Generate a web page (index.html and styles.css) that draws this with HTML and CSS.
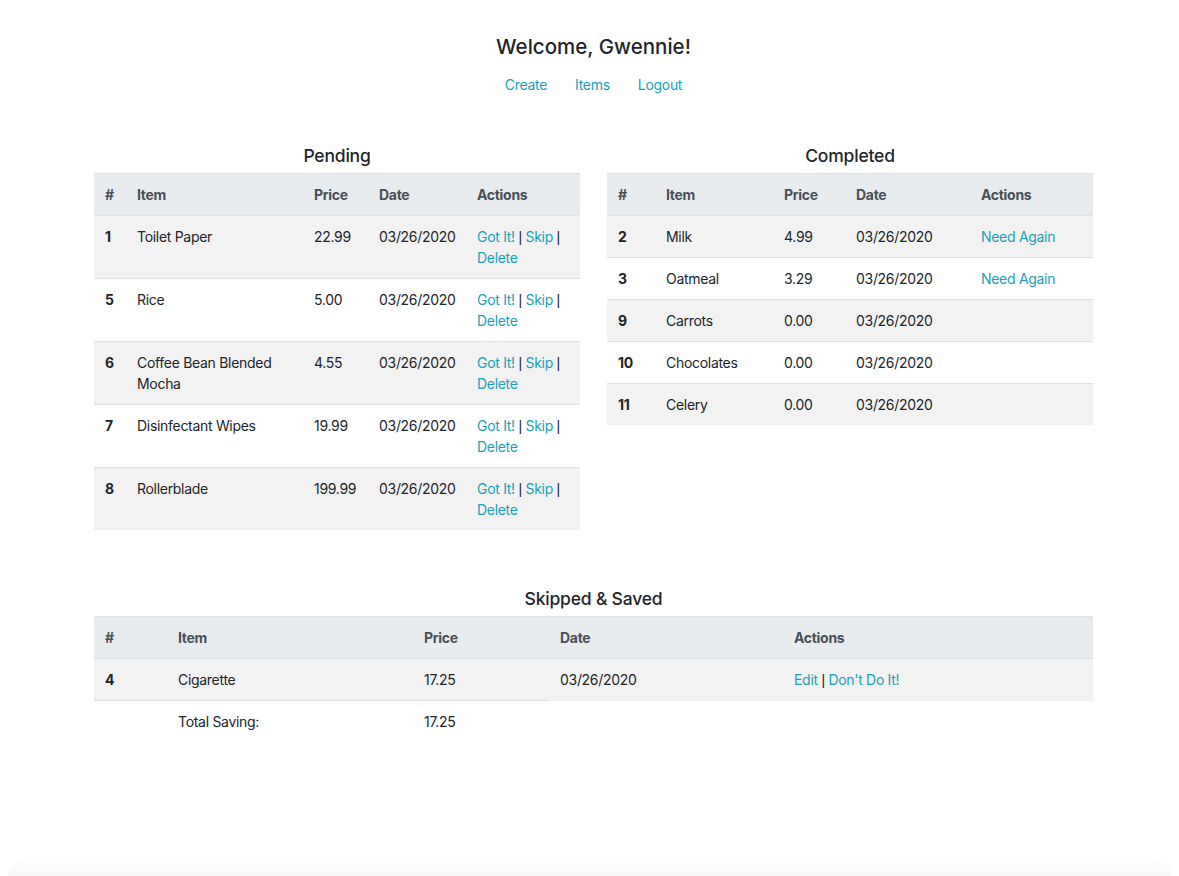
FILE: index.html
```html
<!DOCTYPE html>
<html lang="en">
<head>
<meta charset="utf-8">
<title>Shopping List</title>
<link rel="stylesheet" href="styles.css">
</head>
<body>
<div class="page">
  <header class="top">
    <h1 class="welcome">Welcome, Gwennie!</h1>
    <nav class="nav">
      <a href="#">Create</a>
      <a href="#">Items</a>
      <a href="#">Logout</a>
    </nav>
  </header>

  <div class="lists">
    <section class="list">
      <h2 class="list-title">Pending</h2>
      <table class="tbl tbl-pending">
        <thead>
          <tr><th class="c-num">#</th><th class="c-item">Item</th><th class="c-price">Price</th><th class="c-date">Date</th><th class="c-act">Actions</th></tr>
        </thead>
        <tbody>
          <tr><td class="num">1</td><td>Toilet Paper</td><td>22.99</td><td>03/26/2020</td><td><a href="#">Got It!</a> <span class="sep">|</span> <a href="#">Skip</a> <span class="sep">|</span> <a href="#">Delete</a></td></tr>
          <tr><td class="num">5</td><td>Rice</td><td>5.00</td><td>03/26/2020</td><td><a href="#">Got It!</a> <span class="sep">|</span> <a href="#">Skip</a> <span class="sep">|</span> <a href="#">Delete</a></td></tr>
          <tr><td class="num">6</td><td>Coffee Bean Blended Mocha</td><td>4.55</td><td>03/26/2020</td><td><a href="#">Got It!</a> <span class="sep">|</span> <a href="#">Skip</a> <span class="sep">|</span> <a href="#">Delete</a></td></tr>
          <tr><td class="num">7</td><td>Disinfectant Wipes</td><td>19.99</td><td>03/26/2020</td><td><a href="#">Got It!</a> <span class="sep">|</span> <a href="#">Skip</a> <span class="sep">|</span> <a href="#">Delete</a></td></tr>
          <tr><td class="num">8</td><td>Rollerblade</td><td>199.99</td><td>03/26/2020</td><td><a href="#">Got It!</a> <span class="sep">|</span> <a href="#">Skip</a> <span class="sep">|</span> <a href="#">Delete</a></td></tr>
        </tbody>
      </table>
    </section>

    <section class="list">
      <h2 class="list-title">Completed</h2>
      <table class="tbl tbl-completed">
        <thead>
          <tr><th class="c-num">#</th><th class="c-item">Item</th><th class="c-price">Price</th><th class="c-date">Date</th><th class="c-act">Actions</th></tr>
        </thead>
        <tbody>
          <tr><td class="num">2</td><td>Milk</td><td>4.99</td><td>03/26/2020</td><td><a href="#">Need Again</a></td></tr>
          <tr><td class="num">3</td><td>Oatmeal</td><td>3.29</td><td>03/26/2020</td><td><a href="#">Need Again</a></td></tr>
          <tr><td class="num">9</td><td>Carrots</td><td>0.00</td><td>03/26/2020</td><td></td></tr>
          <tr><td class="num">10</td><td>Chocolates</td><td>0.00</td><td>03/26/2020</td><td></td></tr>
          <tr><td class="num">11</td><td>Celery</td><td>0.00</td><td>03/26/2020</td><td></td></tr>
        </tbody>
      </table>
    </section>
  </div>

  <section class="skipped">
    <h2 class="list-title">Skipped &amp; Saved</h2>
    <table class="tbl tbl-skipped">
      <thead>
        <tr><th class="c-num">#</th><th class="c-item">Item</th><th class="c-price">Price</th><th class="c-date">Date</th><th class="c-act">Actions</th></tr>
      </thead>
      <tbody>
        <tr><td class="num">4</td><td>Cigarette</td><td>17.25</td><td>03/26/2020</td><td><a href="#">Edit</a> <span class="sep">|</span> <a href="#">Don't Do It!</a></td></tr>
        <tr class="total"><td></td><td>Total Saving:</td><td>17.25</td></tr>
      </tbody>
    </table>
  </section>
</div>
<div class="bottom-fade"></div>
</body>
</html>
```

FILE: styles.css
```css
html, body {
  margin: 0;
  padding: 0;
  background: #fff;
}

body {
  font-family: Inter, "Noto Sans", "Liberation Sans", sans-serif;
  font-size: 14px;
  line-height: 21px;
  letter-spacing: -0.3px;
  color: #212529;
  padding-left: 8px;
  overflow: hidden;
  height: 876px;
  position: relative;
}

a {
  color: #17a2b8;
  text-decoration: none;
}

.sep {
  color: #212529;
  font-family: "Liberation Sans", sans-serif;
  line-height: 1;
}

.page {
  width: 999px;
  margin: 0 auto;
  padding-top: 35px;
}

.top {
  display: flex;
  flex-direction: column;
  align-items: center;
}

.welcome {
  margin: 0;
  font-size: 20.5px;
  line-height: 24px;
  font-weight: 500;
  letter-spacing: 0;
}

.nav {
  display: flex;
  margin-top: 8px;
}

.nav a {
  padding: 7px 14px;
  line-height: 21px;
}

.lists {
  display: grid;
  grid-template-columns: 486px 486px;
  column-gap: 27px;
  margin-top: 43px;
  align-items: start;
}

.list-title {
  margin: 0 0 7px;
  text-align: center;
  font-size: 17.5px;
  line-height: 21px;
  font-weight: 500;
  letter-spacing: -0.2px;
}

.tbl {
  width: 100%;
  border-collapse: collapse;
}

.tbl th,
.tbl td {
  padding: 10px 10px 10px 11px;
  border-top: 1px solid #dee2e6;
  text-align: left;
  vertical-align: top;
}

.tbl thead th {
  background: #e9ecef;
  color: #495057;
  font-weight: 700;
  font-size: 14px;
}

.tbl tbody tr:nth-child(odd) {
  background: #f2f2f2;
}

.tbl tbody tr.total {
  background: transparent;
}

.num {
  font-weight: 700;
}

.tbl-pending .c-num { width: 11px; }
.tbl-pending .c-item { width: 156px; }
.tbl-pending .c-price { width: 44px; }
.tbl-pending .c-date { width: 77px; }

.tbl-completed .c-num { width: 27px; }
.tbl-completed .c-item { width: 97px; }
.tbl-completed .c-price { width: 51px; }
.tbl-completed .c-date { width: 104px; }

.skipped {
  margin-top: 58px;
}

.tbl-skipped .c-num { width: 52px; }
.tbl-skipped .c-item { width: 225px; }
.tbl-skipped .c-price { width: 115px; }
.tbl-skipped .c-date { width: 213px; }

.bottom-fade {
  position: absolute;
  left: 8px;
  right: 8px;
  bottom: 0;
  height: 20px;
  border-radius: 20px 20px 0 0;
  background: linear-gradient(to bottom, rgba(0, 0, 0, 0), rgba(0, 0, 0, 0.03));
}
```
